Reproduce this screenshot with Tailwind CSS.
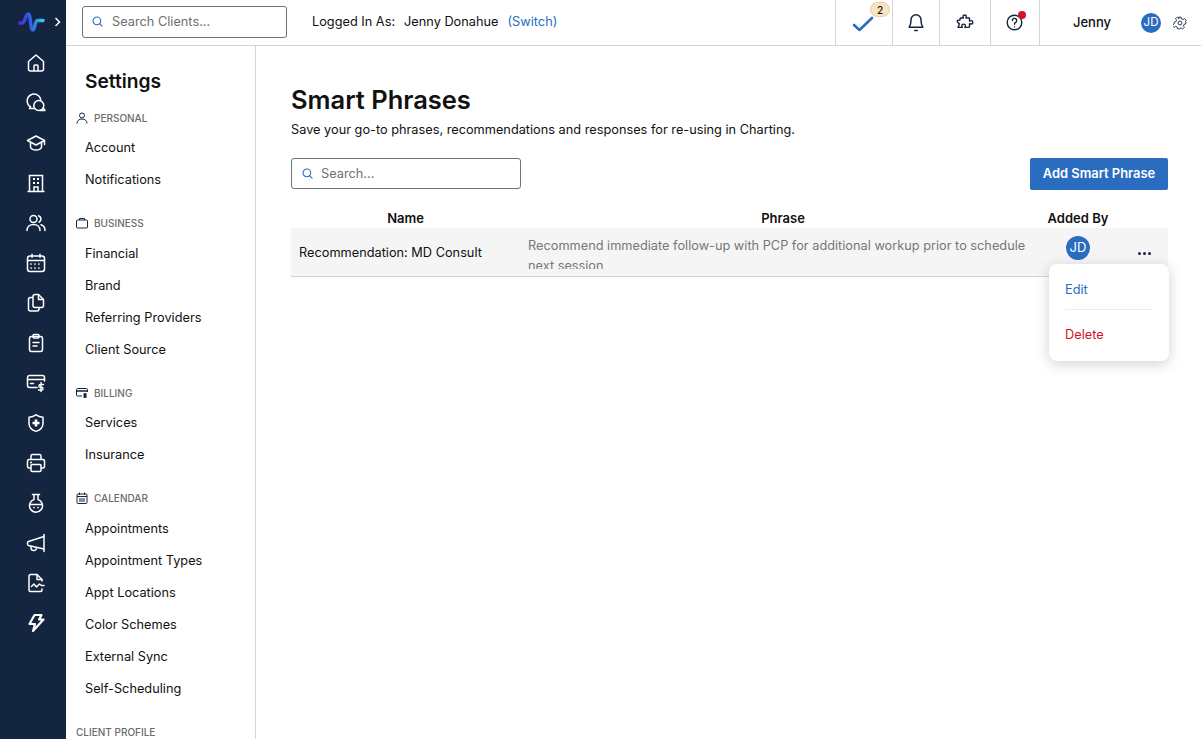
<!doctype html>
<html>
<head>
    <meta charset="UTF-8">
    <meta name="viewport" content="width=device-width, initial-scale=1.0">
    <script src="https://cdn.jsdelivr.net/npm/@tailwindcss/browser@4"></script>
</head>
<body class="h-screen w-screen overflow-hidden flex bg-white text-[12.75px] text-[#111] font-['Inter',sans-serif]">
    <!-- Icon rail -->
    <nav class="w-[66px] h-full shrink-0 bg-[#14253f] flex flex-col items-center text-white">
        <div class="h-[43px] w-full flex items-center pl-[18px] gap-[9px]">
            <svg width="27" height="20" viewBox="0 0 27 20" fill="none" stroke-width="3.400" stroke-linecap="round" stroke-linejoin="round">
                <defs>
                    <linearGradient id="logo" x1="0" x2="1" y1="0" y2="0">
                        <stop offset="0" stop-color="#4a2fe0" />
                        <stop offset="0.55" stop-color="#2f6be8" />
                        <stop offset="1" stop-color="#35d0ee" />
                    </linearGradient>
                </defs>
                <path stroke="url(#logo)" d="M1.800 11h2.200c3 0 3.500-9 6.200-9 2.800 0 1.800 16 4.600 16 2.400 0 1.500-9.500 4.700-9.500H25" />
            </svg>
            <svg width="7" height="10" viewBox="0 0 7 10" fill="none" stroke="currentColor" stroke-width="1.500"><path d="m1.500 1 4 4-4 4" /></svg>
        </div>
        <div class="flex flex-col items-center pl-[6px]">
            <!-- home -->
            <a class="h-10 flex items-center justify-center"><svg width="20" height="20" viewBox="0 0 20 20" fill="none" stroke="currentColor" stroke-width="1.500" stroke-linejoin="round"><path d="M2.500 8.500 10 2l7.500 6.500V16a2 2 0 0 1-2 2h-11a2 2 0 0 1-2-2z" /><path d="M8 18v-5a1 1 0 0 1 1-1h2a1 1 0 0 1 1 1v5" /></svg></a>
            <!-- chat -->
            <a class="h-10 flex items-center justify-center"><svg width="20" height="20" viewBox="0 0 20 20" fill="none" stroke="currentColor" stroke-width="1.500" stroke-linejoin="round" stroke-linecap="round"><path d="M8.500 15.500H3.500l1-1.800a6.800 6.800 0 1 1 10.300-6" /><circle cx="12.800" cy="12.500" r="5" /><path d="M14 17.500h5l-1.800-2.500" /></svg></a>
            <!-- education -->
            <a class="h-10 flex items-center justify-center"><svg width="20" height="20" viewBox="0 0 20 20" fill="none" stroke="currentColor" stroke-width="1.500" stroke-linejoin="round" stroke-linecap="round"><path d="M10 3 1.500 7.500 10 12l8.500-4.500z" /><path d="M4.500 9.500V14c0 1.500 2.500 3 5.500 3s5.500-1.500 5.500-3V9.500" /><path d="M18.500 7.500v4" /></svg></a>
            <!-- building -->
            <a class="h-10 flex items-center justify-center"><svg width="20" height="20" viewBox="0 0 20 20" fill="none" stroke="currentColor" stroke-width="1.500"><path d="M1.500 18.500h17M3.500 18.500V2.500h13v16" /><path d="M8 18.500V14h4v4.500" /><path stroke-dasharray="2 2" d="M7 6h6M7 10h6" stroke-width="2" /></svg></a>
            <!-- people -->
            <a class="h-10 flex items-center justify-center"><svg width="20" height="20" viewBox="0 0 20 20" fill="none" stroke="currentColor" stroke-width="1.500" stroke-linecap="round"><circle cx="7.500" cy="6" r="3.500" /><path d="M1 17.500c0-3.800 2.800-6 6.500-6s6.500 2.200 6.500 6" /><path d="M12.500 2.700a3.500 3.500 0 0 1 .5 6.500M15 11.800c2.500.8 4 2.900 4 5.700" /></svg></a>
            <!-- calendar -->
            <a class="h-10 flex items-center justify-center"><svg width="20" height="20" viewBox="0 0 20 20" fill="none" stroke="currentColor" stroke-width="1.500" stroke-linecap="round"><rect x="1.500" y="3" width="17" height="15.500" rx="2.500" /><path d="M1.500 7.500h17M6 1.200v3M14 1.200v3" /><path stroke-dasharray="0.1 3.800" stroke-width="1.700" d="M5 11h10.500M5 15h10.500" /></svg></a>
            <!-- documents -->
            <a class="h-10 flex items-center justify-center"><svg width="20" height="20" viewBox="0 0 20 20" fill="none" stroke="currentColor" stroke-width="1.500" stroke-linejoin="round"><path d="M7 4.500H4.500a2 2 0 0 0-2 2V16a2 2 0 0 0 2 2H11a2 2 0 0 0 2-2v-1.500" /><path d="M7 3.500a2 2 0 0 1 2-2h3.500l5 5V12.500a2 2 0 0 1-2 2H9a2 2 0 0 1-2-2z" /><path d="M12.500 1.500V6.500h5" /></svg></a>
            <!-- clipboard -->
            <a class="h-10 flex items-center justify-center"><svg width="20" height="20" viewBox="0 0 20 20" fill="none" stroke="currentColor" stroke-width="1.500" stroke-linecap="round"><rect x="3.500" y="3.500" width="13" height="15" rx="2" /><rect x="7" y="1.500" width="6" height="3.500" rx="1" /><path d="M7 9.500h6M7 13h4" /></svg></a>
            <!-- card with dollar -->
            <a class="h-10 flex items-center justify-center"><svg width="20" height="20" viewBox="0 0 20 20" fill="none" stroke="currentColor" stroke-width="1.500" stroke-linecap="round"><path d="M11 14.500H3.500a2 2 0 0 1-2-2v-8a2 2 0 0 1 2-2h13a2 2 0 0 1 2 2V8" /><path d="M1.500 6.500h17" /><path d="M4.500 10.500h3" /><path stroke-width="1.400" d="M15 9.500v9M17.500 11.500h-3.200a1.300 1.300 0 0 0 0 2.800h1.400a1.300 1.300 0 0 1 0 2.700h-3.200" /></svg></a>
            <!-- shield -->
            <a class="h-10 flex items-center justify-center"><svg width="20" height="20" viewBox="0 0 20 20" fill="none" stroke="currentColor" stroke-width="1.500" stroke-linejoin="round"><path d="M10 1.800c2 1.400 4.300 2.200 7 2.400v6c0 4-3 6.900-7 8.200-4-1.300-7-4.200-7-8.200v-6c2.700-.2 5-1 7-2.400z" /><path fill="currentColor" stroke="none" d="M8.700 6.500h2.600v2.200h2.200v2.600h-2.200v2.200H8.700v-2.200H6.500V8.700h2.200z" /></svg></a>
            <!-- printer -->
            <a class="h-10 flex items-center justify-center"><svg width="20" height="20" viewBox="0 0 20 20" fill="none" stroke="currentColor" stroke-width="1.500" stroke-linejoin="round"><path d="M5 6.500V3a1.500 1.500 0 0 1 1.500-1.500h7A1.500 1.500 0 0 1 15 3v3.500" /><path d="M5 15H3a1.500 1.500 0 0 1-1.500-1.500V8A1.500 1.500 0 0 1 3 6.500h14A1.500 1.500 0 0 1 18.500 8v5.500A1.500 1.500 0 0 1 17 15h-2" /><rect x="5" y="11.500" width="10" height="7" rx="1" /><path d="M4 9.500h2" /></svg></a>
            <!-- flask -->
            <a class="h-10 flex items-center justify-center"><svg width="20" height="20" viewBox="0 0 20 20" fill="none" stroke="currentColor" stroke-width="1.500" stroke-linecap="round"><path d="M6.500 1.500h7M8 1.500v5a6.500 6.500 0 1 0 4 0v-5" /><path d="M4 11.500h12" /><path stroke-width="1.700" d="M8 14.500h.1M12 14.500h.1" /></svg></a>
            <!-- megaphone -->
            <a class="h-10 flex items-center justify-center"><svg width="20" height="20" viewBox="0 0 20 20" fill="none" stroke="currentColor" stroke-width="1.500" stroke-linejoin="round" stroke-linecap="round"><path d="M18 1.500v17" /><path d="M18 3.500 2.500 8.500a1.500 1.500 0 0 0-1 1.400v1.200a1.500 1.500 0 0 0 1 1.400L18 16" /><path d="M5 13.500v1.500a2.500 2.500 0 0 0 2.500 2.500H8a2.500 2.500 0 0 0 2.500-2.500" /></svg></a>
            <!-- report -->
            <a class="h-10 flex items-center justify-center"><svg width="20" height="20" viewBox="0 0 20 20" fill="none" stroke="currentColor" stroke-width="1.500" stroke-linejoin="round" stroke-linecap="round"><path d="M16 8V6.500l-5-5H4.500a1.500 1.500 0 0 0-1.500 1.500v14a1.500 1.500 0 0 0 1.500 1.500h10a1.500 1.500 0 0 0 1.500-1.500v-1" /><path d="M11 1.500V6.500h5" /><path d="M5.500 13.500l2.500-2.500 2.500 3 3-3 2 1.500h2.500" /></svg></a>
            <!-- bolt -->
            <a class="h-10 flex items-center justify-center"><svg width="20" height="20" viewBox="0 0 20 20" fill="none" stroke="currentColor" stroke-width="2.200" stroke-linejoin="round"><path d="M8.500 2h7l-2.500 4.500H17.500L7 18l2-7H3.500z" /></svg></a>
        </div>
    </nav>

    <div class="flex-1 min-w-0 flex flex-col h-full">
        <!-- Top bar -->
        <header class="h-[46px] shrink-0 flex border-b border-[#d4d4d4]">
            <div class="flex items-center flex-1 pl-4 pb-[2px]">
                <div class="w-[205px] h-8 border border-[#6b7280] rounded-[3px] flex items-center pl-[9px] gap-[9px] text-[#6f6f6f]">
                    <svg width="11" height="11" viewBox="0 0 12 12" fill="none" stroke="#2a6cc0" stroke-width="1.200" stroke-linecap="round"><circle cx="5.300" cy="5.300" r="4.200" /><path d="m8.500 8.500 2.500 2.500" /></svg>
                    <span>Search Clients...</span>
                </div>
                <span class="ml-[25px]">Logged In As:</span>
                <span class="ml-[9px]">Jenny Donahue</span>
                <span class="ml-[9px] text-[#2a6cc0]">(Switch)</span>
            </div>
            <div class="flex h-full">
                <div class="relative w-[57px] border-l border-[#d4d4d4] flex items-center justify-center">
                    <svg width="22" height="16" viewBox="0 0 22 16" fill="none" stroke="#2a6cc0" stroke-width="2.600" stroke-linecap="round" stroke-linejoin="round" class="ml-[-2px] mt-[3px]"><path d="m2 9 5.500 5L20 2" /></svg>
                    <span class="absolute top-[2px] left-[34px] w-5 h-[15px] rounded-full bg-[#f8e3c3] border border-[#e6cfa6] flex items-center justify-center text-[10px] font-medium leading-none">2</span>
                </div>
                <div class="w-[47px] border-l border-[#d4d4d4] flex items-center justify-center">
                    <svg width="16" height="19" viewBox="0 0 16 19" fill="none" stroke="#14253f" stroke-width="1.500" stroke-linejoin="round" stroke-linecap="round"><path d="M8 1.800a5 5 0 0 0-5 5c0 3.700-.5 5.700-1.800 7.400h13.600C13.500 12.500 13 10.500 13 6.800a5 5 0 0 0-5-5z" /><path d="M6.800 17.500h2.400" /></svg>
                </div>
                <div class="w-[51px] border-l border-[#d4d4d4] flex items-center justify-center">
                    <svg width="18" height="17" viewBox="0 0 18 17" fill="none" stroke="#14253f" stroke-width="1.400" stroke-linejoin="round"><path d="M7 2.200c0-1.600 3.300-1.600 3.300 0 0 .8-.3 1-.3 1.800H13.500v3c.8 0 1-.4 1.800-.4 2 0 2 3.400 0 3.400-.8 0-1-.4-1.800-.4v2.800c0 .5-.5 1-1 1H9c0-.9.400-1.200.400-2 0-1.700-3.600-1.700-3.600 0 0 .8.400 1.100.4 2H2l1.500-3.600C2.800 9.300 1.200 9 1.200 7.600 1.200 6.200 2.500 6 4 6l.3-2H7.400c0-.800-.4-1-.4-1.800z" /></svg>
                </div>
                <div class="relative w-[49px] border-l border-[#d4d4d4] flex items-center justify-center">
                    <svg width="17" height="17" viewBox="0 0 17 17" fill="none" stroke="#14253f" stroke-width="1.400" stroke-linecap="round" class="mr-[2px]"><circle cx="8.500" cy="8.500" r="7.300" /><path d="M6.300 6.500a2.200 2.200 0 1 1 3.400 1.900c-.8.500-1.200.9-1.200 1.900" /><path d="M8.500 12.600v.1" /></svg>
                    <span class="absolute top-[11px] left-[27px] w-2 h-2 rounded-full bg-[#d0122c]"></span>
                </div>
                <div class="w-[162px] border-l border-[#d4d4d4] flex items-center pl-[33px]">
                    <span class="w-[68px] text-[13px] font-medium">Jenny</span>
                    <span class="w-5 h-5 rounded-full bg-[#2a6cc0] text-white text-[11.5px] flex items-center justify-center">JD</span>
                    <svg width="14" height="14" viewBox="0 0 24 24" fill="none" stroke="#14253f" stroke-width="1.500" stroke-linejoin="round" class="ml-[12px]"><circle cx="12" cy="12" r="3.300" /><path d="M10 2h4l.7 3 2.600 1.100 2.600-1.600 2.800 2.800-1.600 2.600L22 10.500v3l-3 .7-1.100 2.600 1.600 2.600-2.800 2.800-2.600-1.600-2.400 1V22h-4l-.7-3-2.600-1.100-2.600 1.600-2.800-2.800 1.600-2.600L2 13.500v-3l3-.7 1.100-2.600-1.600-2.600 2.800-2.800 2.600 1.600L10 5z" /></svg>
                </div>
            </div>
        </header>

        <div class="flex-1 min-h-0 flex">
            <!-- Settings sidebar -->
            <aside class="w-[190px] h-full shrink-0 border-r border-[#d4d4d4] overflow-hidden pl-[10px]">
                <h2 class="pl-[9px] mt-[21px] text-[19.2px] leading-7 font-semibold">Settings</h2>

                <div class="mt-[15px] flex items-center gap-[6px] h-4 text-[10px] font-medium text-[#6b6b6b]">
                    <svg width="12" height="12" viewBox="0 0 12 12" fill="none" stroke="#14253f" stroke-width="1"><circle cx="6" cy="3.500" r="2.500" /><path d="M1 11.500c0-3 2.200-4.500 5-4.500s5 1.500 5 4.500" /></svg>
                    <span>PERSONAL</span>
                </div>
                <ul class="pl-[9px] mt-[6px]">
                    <li class="h-8 flex items-center">Account</li>
                    <li class="h-8 flex items-center">Notifications</li>
                </ul>

                <div class="mt-[19px] flex items-center gap-[6px] h-4 text-[10px] font-medium text-[#6b6b6b]">
                    <svg width="12" height="12" viewBox="0 0 12 12" fill="none" stroke="#14253f" stroke-width="1"><rect x="0.500" y="3" width="11" height="8" rx="1" /><path d="M3.500 3V1.500h5V3" /></svg>
                    <span>BUSINESS</span>
                </div>
                <ul class="pl-[9px] mt-[7px]">
                    <li class="h-8 flex items-center">Financial</li>
                    <li class="h-8 flex items-center">Brand</li>
                    <li class="h-8 flex items-center">Referring Providers</li>
                    <li class="h-8 flex items-center">Client Source</li>
                </ul>

                <div class="mt-[19px] flex items-center gap-[6px] h-4 text-[10px] font-medium text-[#6b6b6b]">
                    <svg width="12" height="12" viewBox="0 0 12 12" fill="none" stroke="#14253f" stroke-width="1"><path d="M6 9H1.500a1 1 0 0 1-1-1V2.500a1 1 0 0 1 1-1h9a1 1 0 0 1 1 1V5" /><path stroke-width="1.500" d="M0.500 4h11M9 6v5M10.500 7H8.300v1.500h1.500V10H7.500" /></svg>
                    <span>BILLING</span>
                </div>
                <ul class="pl-[9px] mt-[6px]">
                    <li class="h-8 flex items-center">Services</li>
                    <li class="h-8 flex items-center">Insurance</li>
                </ul>

                <div class="mt-[19px] flex items-center gap-[6px] h-4 text-[10px] font-medium text-[#6b6b6b]">
                    <svg width="12" height="12" viewBox="0 0 12 12" fill="none" stroke="#14253f" stroke-width="1"><rect x="1" y="2" width="10" height="9.500" rx="1" /><path d="M1 4.500h10M3.500 0.500V3M8.500 0.500V3M3 7h6M3 9h6" /></svg>
                    <span>CALENDAR</span>
                </div>
                <ul class="pl-[9px] mt-[7px]">
                    <li class="h-8 flex items-center">Appointments</li>
                    <li class="h-8 flex items-center">Appointment Types</li>
                    <li class="h-8 flex items-center">Appt Locations</li>
                    <li class="h-8 flex items-center">Color Schemes</li>
                    <li class="h-8 flex items-center">External Sync</li>
                    <li class="h-8 flex items-center">Self-Scheduling</li>
                </ul>

                <div class="mt-[19px] flex items-center h-4 text-[10px] font-medium text-[#6b6b6b]">CLIENT PROFILE</div>
            </aside>

            <!-- Main content -->
            <main class="flex-1 min-w-0 pl-[35px] pr-[33px] pt-[38px]">
                <h1 class="text-[25.5px] leading-8 font-semibold">Smart Phrases</h1>
                <p class="mt-[4px] leading-5">Save your go-to phrases, recommendations and responses for re-using in Charting.</p>

                <div class="mt-[18px] flex items-start justify-between">
                    <div class="w-[230px] h-[31px] border border-[#6b7280] rounded-[3px] flex items-center pl-[10px] gap-[8px] text-[#6f6f6f]">
                        <svg width="11" height="11" viewBox="0 0 12 12" fill="none" stroke="#2a6cc0" stroke-width="1.200" stroke-linecap="round"><circle cx="5.300" cy="5.300" r="4.200" /><path d="m8.500 8.500 2.500 2.500" /></svg>
                        <span>Search...</span>
                    </div>
                    <button class="w-[138px] h-8 bg-[#2a6cc0] rounded-[2px] text-white text-[12.9px] font-semibold">Add Smart Phrase</button>
                </div>

                <!-- Table -->
                <div class="relative mt-[20px]">
                    <div class="flex h-[18px] items-center text-[13px] font-semibold text-center">
                        <div class="w-[229px]">Name</div>
                        <div class="w-[526px]">Phrase</div>
                        <div class="w-[64px]">Added By</div>
                    </div>
                    <div class="flex h-[49px] bg-[#f5f5f5] border-b border-[#d4d4d4] items-center">
                        <div class="w-[229px] pl-2 pt-[1px]">Recommendation: MD Consult</div>
                        <div class="w-[526px] h-full pl-2 pr-4 pt-[8px]">
                            <div class="h-[33px] overflow-hidden leading-5 text-[#777]">Recommend immediate follow-up with PCP for additional workup prior to schedule next session</div>
                        </div>
                        <div class="w-[64px] flex justify-center self-start pt-[8px]">
                            <span class="w-6 h-6 rounded-full bg-[#2a6cc0] text-white text-[13px] flex items-center justify-center">JD</span>
                        </div>
                        <div class="flex-1 flex justify-end pr-[17px] gap-[2px] pt-[2px]">
                            <span class="w-[3px] h-[3px] rounded-full bg-[#14253f]"></span>
                            <span class="w-[3px] h-[3px] rounded-full bg-[#14253f]"></span>
                            <span class="w-[3px] h-[3px] rounded-full bg-[#14253f]"></span>
                        </div>
                    </div>

                    <!-- Row menu -->
                    <div class="absolute top-[54px] right-[-1px] w-[120px] h-[97px] bg-white rounded-lg shadow-[0_3px_14px_rgba(0,0,0,0.18)] px-4 pt-[16px]">
                        <div class="h-5 flex items-center text-[#2a6cc0]">Edit</div>
                        <div class="mt-[9px] border-t border-[#ececec]"></div>
                        <div class="mt-[15px] h-5 flex items-center text-[#d0122c]">Delete</div>
                    </div>
                </div>
            </main>
        </div>
    </div>
</body>
</html>
